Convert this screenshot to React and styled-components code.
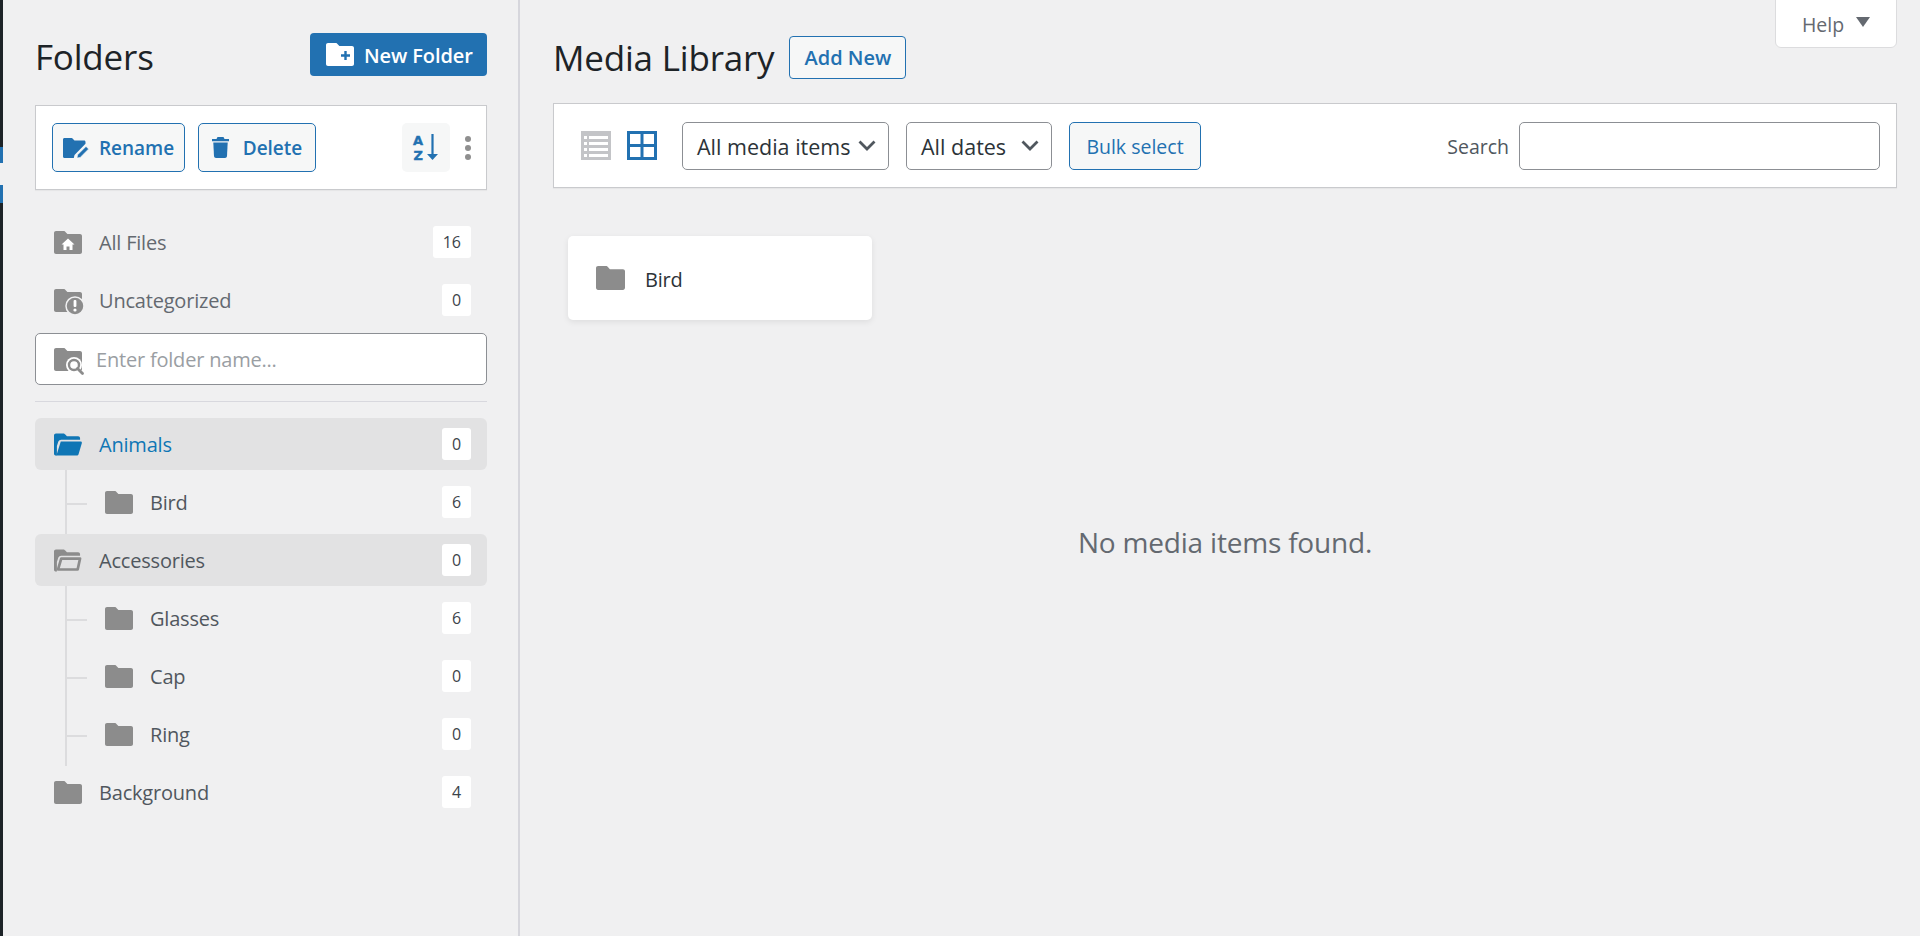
import React from "react";
import styled, { createGlobalStyle } from "styled-components";

const GlobalStyle = createGlobalStyle`
  html, body {
    margin: 0;
    height: 100%;
    overflow: hidden;
    background: #f0f0f1;
  }
  body {
    font-family: "Open Sans", "Noto Sans", sans-serif;
    color: #3c434a;
  }
  * { box-sizing: border-box; }
`;

const Page = styled.div`
  display: flex;
  height: 936px;
  position: relative;
`;

// what is left visible of the wp admin menu
const AdminEdge = styled.div`
  width: 3px;
  flex: none;
  background: linear-gradient(
    #1d2327 0 147px,
    #2271b1 147px 163px,
    #f0f0f1 163px 185px,
    #2271b1 185px 203px,
    #1d2327 203px
  );
`;

const Sidebar = styled.aside`
  width: 517px;
  flex: none;
  padding: 33px 31px 0 32px;
  border-right: 2px solid #d6d6dc;
`;

const SidebarHead = styled.div`
  display: flex;
  justify-content: space-between;
  align-items: center;
  height: 43px;
  margin-bottom: 29px;
`;

const Title = styled.h1`
  margin: 0;
  padding-top: ${(p) => p.$nudge || 0}px;
  font-size: 35px;
  font-weight: 400;
  line-height: 43px;
  color: #1d2327;
  letter-spacing: -0.2px;
`;

const PrimaryButton = styled.button`
  display: flex;
  align-items: center;
  gap: 10px;
  width: 177px;
  height: 43px;
  padding: 0 0 0 16px;
  border: none;
  border-radius: 4px;
  background: #2271b1;
  color: #fff;
  font: 600 20px "Open Sans", sans-serif;
  letter-spacing: -0.1px;
  white-space: nowrap;

  span {
    padding-top: 2px;
  }
`;

const ActionBar = styled.div`
  display: flex;
  align-items: center;
  height: 85px;
  padding: 0 15px 0 16px;
  background: #fff;
  border: 1px solid #c9cacd;
  box-shadow: 0 1px 1px rgba(0, 0, 0, 0.04);
`;

const ActionButton = styled.button`
  display: flex;
  align-items: center;
  justify-content: center;
  gap: ${(p) => p.$gap || 10}px;
  width: ${(p) => p.$width}px;
  height: 49px;
  margin-right: 13px;
  padding: 0;
  background: #f6f7f7;
  border: 1px solid #2271b1;
  border-radius: 5px;
  color: #2271b1;
  font: 600 19px "Open Sans", sans-serif;
`;

const SortButton = styled.button`
  display: flex;
  align-items: center;
  justify-content: center;
  width: 48px;
  height: 49px;
  margin-left: auto;
  padding: 0;
  background: #f6f7f7;
  border: none;
  border-radius: 5px;

  svg {
    overflow: visible;
  }
`;

const MoreDots = styled.div`
  display: flex;
  flex-direction: column;
  gap: 3px;
  margin: 0 0 0 15px;

  span {
    width: 6px;
    height: 6px;
    border-radius: 50%;
    background: #8f8f8f;
  }
`;

const FolderList = styled.div`
  margin-top: 26px;
`;

const Row = styled.div`
  position: relative;
  display: flex;
  align-items: center;
  height: 52px;
  margin-bottom: 6px;
  padding: 0 16px 0 ${(p) => (p.$child ? 70 : 19)}px;
  border-radius: 6px;
  background: ${(p) => (p.$open ? "#e2e2e3" : "transparent")};

  ${(p) =>
    p.$child &&
    `&::before {
      content: "";
      position: absolute;
      left: 31px;
      top: 27px;
      width: 21px;
      height: 2px;
      background: #dcdcde;
    }`}
`;

const IconSlot = styled.span`
  display: flex;
  width: 28px;
  flex: none;
  margin-right: ${(p) => p.$gap || 17}px;
`;

const Label = styled.span`
  flex: 1;
  padding-top: 1px;
  font-size: 20px;
  letter-spacing: -0.2px;
  color: ${(p) => (p.$active ? "#0f76b5" : p.$muted ? "#646970" : "#50575e")};
`;

const Count = styled.span`
  display: flex;
  align-items: center;
  justify-content: center;
  height: 32px;
  min-width: 29px;
  padding: 0 ${(p) => (p.$wide ? 10 : 0)}px;
  border-radius: 3px;
  background: #fff;
  font-size: 16px;
  color: #3c434a;
`;

const TreeGroup = styled.div`
  position: relative;

  &::before {
    content: "";
    position: absolute;
    left: 30px;
    top: -6px;
    bottom: -6px;
    width: 2px;
    background: #dcdcde;
  }
`;

const FolderSearch = styled.div`
  display: flex;
  align-items: center;
  height: 52px;
  margin-top: 7px;
  padding-left: 18px;
  background: #fff;
  border: 1px solid #8c8f94;
  border-radius: 5px;
`;

const FolderInput = styled.input`
  flex: 1;
  min-width: 0;
  border: none;
  outline: none;
  background: none;
  padding: 0;
  font: 20px "Open Sans", sans-serif;
  letter-spacing: -0.2px;

  &::placeholder {
    color: #9a9ea3;
    opacity: 1;
  }
`;

const Divider = styled.hr`
  height: 1px;
  margin: 16px 0;
  border: none;
  background: #d8d8de;
`;

const Main = styled.main`
  flex: 1;
  min-width: 0;
  padding: 36px 23px 0 33px;
`;

const HelpTab = styled.button`
  position: absolute;
  top: -1px;
  right: 23px;
  display: flex;
  align-items: center;
  justify-content: center;
  gap: 12px;
  width: 122px;
  height: 49px;
  padding: 2px 0 0;
  background: #fff;
  border: 1px solid #dcdcde;
  border-radius: 0 0 6px 6px;
  color: #646970;
  font: 19.5px "Open Sans", sans-serif;

  i {
    width: 0;
    height: 0;
    margin-top: -6px;
    border-left: 7px solid transparent;
    border-right: 7px solid transparent;
    border-top: 10px solid #646970;
  }
`;

const MainHead = styled.div`
  display: flex;
  align-items: center;
  gap: 15px;
  height: 43px;
  margin-bottom: 24px;
`;

const OutlineButton = styled.button`
  width: 117px;
  height: 43px;
  padding: 0;
  background: #f6f7f7;
  border: 1px solid #2271b1;
  border-radius: 4px;
  color: #2271b1;
  font: 600 20px "Open Sans", sans-serif;
`;

const MediaToolbar = styled.div`
  display: flex;
  align-items: center;
  height: 85px;
  padding: 0 16px 0 27px;
  background: #fff;
  border: 1px solid #c9cacd;
  box-shadow: 0 1px 1px rgba(0, 0, 0, 0.04);
`;

const ViewSwitch = styled.div`
  display: flex;
  gap: 16px;
  margin-right: 25px;

  svg {
    display: block;
  }
`;

const SelectBox = styled.div`
  display: flex;
  align-items: center;
  justify-content: space-between;
  width: ${(p) => p.$width}px;
  height: 48px;
  margin-right: 17px;
  padding: 0 12px 0 14px;
  background: #fff;
  border: 1px solid #8c8f94;
  border-radius: 5px;
  font-size: 21.5px;
  color: #2c3338;

  span {
    padding-top: 1px;
  }
`;

const BulkButton = styled.button`
  width: 132px;
  height: 48px;
  padding: 2px 0 0;
  background: #f6f7f7;
  border: 1px solid #2271b1;
  border-radius: 5px;
  color: #2271b1;
  font: 19.5px "Open Sans", sans-serif;
`;

const SearchArea = styled.label`
  display: flex;
  align-items: center;
  gap: 10px;
  margin-left: auto;
  font-size: 19.5px;
  color: #50575e;

  span {
    padding-top: 2px;
  }
`;

const SearchInput = styled.input`
  width: 361px;
  height: 48px;
  background: #fff;
  border: 1px solid #8c8f94;
  border-radius: 5px;
  outline: none;
`;

const FolderCard = styled.div`
  display: flex;
  align-items: center;
  gap: 20px;
  width: 304px;
  height: 84px;
  margin: 48px 0 0 15px;
  padding-left: 28px;
  background: #fff;
  border-radius: 5px;
  box-shadow: 0 2px 6px rgba(0, 0, 0, 0.08);
  font-size: 20px;
  letter-spacing: -0.2px;
  color: #2c3338;

  span {
    padding-top: 2px;
  }
`;

const EmptyMessage = styled.p`
  margin: 203px 0 0;
  text-align: center;
  font-size: 28px;
  letter-spacing: -0.2px;
  color: #646970;
`;

const GREY = "#8c8c8c";
const BLUE = "#2271b1";

const FOLDER_D =
  "M2 0h7.5c1 0 1.6.4 2.2 1.2L13.4 3H26c1.1 0 2 .9 2 2v16c0 1.1-.9 2-2 2H2c-1.1 0-2-.9-2-2V2C0 .9.9 0 2 0z";

function FolderIcon({ color = GREY, width = 28, height = 23, children }) {
  return (
    <svg width={width} height={height} viewBox="0 0 28 23" style={{ overflow: "visible" }}>
      <path d={FOLDER_D} fill={color} />
      {children}
    </svg>
  );
}

function HomeFolder() {
  return (
    <FolderIcon>
      <path d="M14 7.5l-6.5 6h2V19h3v-3.5h3V19h3v-5.5h2z" fill="#fff" />
    </FolderIcon>
  );
}

function AlertFolder() {
  return (
    <FolderIcon>
      <circle cx="21" cy="17" r="9" fill={GREY} stroke="#f0f0f1" strokeWidth="1.5" />
      <rect x="19.6" y="11" width="2.8" height="7" rx="1" fill="#fff" />
      <circle cx="21" cy="21" r="1.6" fill="#fff" />
    </FolderIcon>
  );
}

function SearchFolder() {
  return (
    <FolderIcon>
      <circle cx="20" cy="17" r="8" fill="#fff" />
      <circle cx="20" cy="17" r="5" fill="none" stroke={GREY} strokeWidth="2.4" />
      <path d="M23.5 20.5l5 5" stroke={GREY} strokeWidth="2.8" strokeLinecap="round" />
    </FolderIcon>
  );
}

function OpenFolder({ color = GREY, outlined }) {
  return (
    <svg width="29" height="23" viewBox="0 0 29 23">
      <path
        d="M0 2C0 .9.9 0 2 0h7.5c1 0 1.6.4 2.2 1.2L13.4 3H25c1.1 0 2 .9 2 2v1.5H7.500C6 6.500 5 7.300 4.500 8.500L3 13v10H2c-1.100 0-2-.9-2-2z"
        fill={color}
      />
      {outlined ? (
        <path
          d="M7.5 9.5H27l-2.500 11.300H4.200z"
          fill="none"
          stroke={color}
          strokeWidth="2.8"
          strokeLinejoin="round"
        />
      ) : (
        <path d="M7 8.500h20.500c1 0 1.600.8 1.300 1.800l-3.300 11c-.3 1-1 1.700-2.200 1.700H2.500z" fill={color} />
      )}
    </svg>
  );
}

function PlusFolder() {
  return (
    <svg width="28" height="23" viewBox="0 0 28 23">
      <path d={FOLDER_D} fill="#fff" />
      <path d="M19.500 8v9M15 12.500h9" stroke={BLUE} strokeWidth="2.400" />
    </svg>
  );
}

function RenameFolder() {
  return (
    <svg width="26" height="20" viewBox="0 0 26 20">
      <path
        d="M1.500 0h6.500c1 0 1.500.4 2 1l1.500 1.500H21c1 0 1.500.6 1.500 1.500v1.800L11.500 17l-.7 3H1.500C.6 20 0 19.400 0 18.500v-17C0 .6.600 0 1.500 0z"
        fill={BLUE}
      />
      <path d="M14 20l.6-3.200L23 8.400l2.600 2.600-8.400 8.400z" fill={BLUE} stroke="#f6f7f7" strokeWidth=".6" />
    </svg>
  );
}

function TrashIcon() {
  return (
    <svg width="17" height="21" viewBox="0 0 17 21">
      <path d="M5.500 0h6l1 2H17v2.200H0V2h4.500z" fill={BLUE} />
      <path d="M1.300 5.500h14.400L15 19c-.1 1.200-.9 2-2 2H4c-1.100 0-1.900-.8-2-2z" fill={BLUE} />
    </svg>
  );
}

function SortIcon() {
  return (
    <svg width="26" height="27" viewBox="0 0 26 27">
      <text x="0" y="11" fontFamily="'DejaVu Sans', sans-serif" fontWeight="700" fontSize="13" fill={BLUE} stroke={BLUE} strokeWidth=".4">A</text>
      <text x="0.5" y="25.500" fontFamily="'DejaVu Sans', sans-serif" fontWeight="700" fontSize="13" fill={BLUE} stroke={BLUE} strokeWidth=".4">Z</text>
      <path d="M19.500 0v22" stroke={BLUE} strokeWidth="2.200" />
      <path d="M14 20h11l-5.500 6z" fill={BLUE} />
    </svg>
  );
}

function ListViewIcon() {
  return (
    <svg width="30" height="29" viewBox="0 0 30 29">
      <rect width="30" height="29" fill="#c3c4c7" />
      <path d="M8 5h19v3H8zM8 11h19v3H8zM8 17h19v3H8zM8 23h19v3H8z" fill="#fff" />
      <path d="M3 5h3v3H3zM3 11h3v3H3zM3 17h3v3H3zM3 23h3v3H3z" fill="#fff" />
    </svg>
  );
}

function GridViewIcon() {
  return (
    <svg width="30" height="29" viewBox="0 0 30 29">
      <rect x="1.500" y="1.500" width="27" height="26" fill="none" stroke={BLUE} strokeWidth="3" />
      <path d="M15 1v27M1 14.500h28" stroke={BLUE} strokeWidth="3" />
    </svg>
  );
}

function Chevron() {
  return (
    <svg width="18" height="11" viewBox="0 0 18 11">
      <path d="M1.500 1.500l7.500 7.500 7.500-7.500" fill="none" stroke="#50575e" strokeWidth="2.800" />
    </svg>
  );
}

function FolderRow({ icon, name, count, child, open, active, muted }) {
  return (
    <Row $child={child} $open={open}>
      <IconSlot>{icon || <FolderIcon />}</IconSlot>
      <Label $active={active} $muted={muted}>{name}</Label>
      <Count $wide={count > 9}>{count}</Count>
    </Row>
  );
}

export default function App() {
  return (
    <Page>
      <GlobalStyle />
      <AdminEdge />
      <Sidebar>
        <SidebarHead>
          <Title $nudge={3}>Folders</Title>
          <PrimaryButton>
            <PlusFolder />
            <span>New Folder</span>
          </PrimaryButton>
        </SidebarHead>
        <ActionBar>
          <ActionButton $width={133}>
            <RenameFolder />
            Rename
          </ActionButton>
          <ActionButton $width={118} $gap={14}>
            <TrashIcon />
            Delete
          </ActionButton>
          <SortButton aria-label="Sort">
            <SortIcon />
          </SortButton>
          <MoreDots>
            <span />
            <span />
            <span />
          </MoreDots>
        </ActionBar>
        <FolderList>
          <FolderRow icon={<HomeFolder />} name="All Files" count={16} muted />
          <FolderRow icon={<AlertFolder />} name="Uncategorized" count={0} muted />
          <FolderSearch>
            <IconSlot $gap={14}>
              <SearchFolder />
            </IconSlot>
            <FolderInput placeholder="Enter folder name..." />
          </FolderSearch>
          <Divider />
          <FolderRow icon={<OpenFolder color="#0f76b5" />} name="Animals" count={0} open active />
          <TreeGroup>
            <FolderRow child name="Bird" count={6} />
          </TreeGroup>
          <FolderRow icon={<OpenFolder outlined />} name="Accessories" count={0} open />
          <TreeGroup>
            <FolderRow child name="Glasses" count={6} />
            <FolderRow child name="Cap" count={0} />
            <FolderRow child name="Ring" count={0} />
          </TreeGroup>
          <FolderRow name="Background" count={4} />
        </FolderList>
      </Sidebar>
      <Main>
        <MainHead>
          <Title>Media Library</Title>
          <OutlineButton>Add New</OutlineButton>
        </MainHead>
        <MediaToolbar>
          <ViewSwitch>
            <ListViewIcon />
            <GridViewIcon />
          </ViewSwitch>
          <SelectBox $width={207}>
            <span>All media items</span>
            <Chevron />
          </SelectBox>
          <SelectBox $width={146}>
            <span>All dates</span>
            <Chevron />
          </SelectBox>
          <BulkButton>Bulk select</BulkButton>
          <SearchArea>
            <span>Search</span>
            <SearchInput />
          </SearchArea>
        </MediaToolbar>
        <FolderCard>
          <FolderIcon width={29} height={24} />
          <span>Bird</span>
        </FolderCard>
        <EmptyMessage>No media items found.</EmptyMessage>
      </Main>
      <HelpTab>
        Help
        <i />
      </HelpTab>
    </Page>
  );
}
